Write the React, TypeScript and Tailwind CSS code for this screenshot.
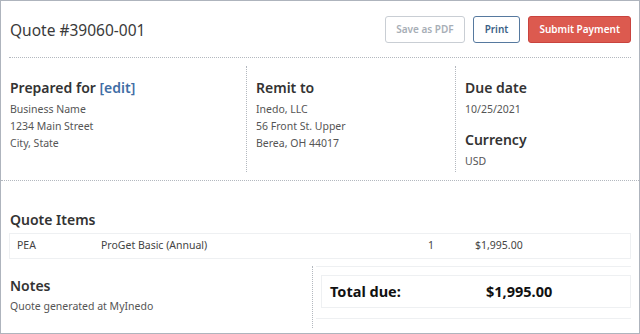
const font = "font-['Segoe_UI','Noto_Sans','Liberation_Sans',sans-serif]";

export default function App() {
  return (
    <div className={`h-[334px] w-[640px] overflow-hidden border border-[#aeb4bd] bg-white text-[#333] ${font}`}>
      <header className="mx-[8px] flex h-[57px] items-center justify-between border-b border-dotted border-[#b3b8bf] pl-[1px]">
        <h1 className="mt-[3px] text-[15.5px] text-[#3a3a3a]">Quote #39060-001</h1>
        <div className="flex items-center gap-[8px]">
          <button className="h-[27px] rounded-[3px] border border-[#c9ced4] px-[10px] text-[10px] font-semibold text-[#a7aeb6]">
            Save as PDF
          </button>
          <button className="h-[27px] rounded-[3px] border border-[#56799f] px-[11px] text-[10px] font-semibold text-[#3b5f86]">
            Print
          </button>
          <button className="h-[27px] rounded-[3px] border border-[#c9433e] bg-[#dc5a4f] px-[10px] text-[10px] font-semibold text-white">
            Submit Payment
          </button>
        </div>
      </header>

      <section className="flex border-b border-dotted border-[#b3b8bf] py-[8px]">
        <div className="w-[246px] border-r border-dotted border-[#b3b8bf] pl-[9px] pt-[12px]">
          <h2 className="text-[14px] font-semibold leading-[20px]">
            Prepared for <span className="text-[#3f6ea5]">[edit]</span>
          </h2>
          <div className="mt-[3px] text-[10.5px] leading-[17px] text-[#555]">
            <p>Business Name</p>
            <p>1234 Main Street</p>
            <p>City, State</p>
          </div>
        </div>
        <div className="h-[106px] w-[209px] border-r border-dotted border-[#b3b8bf] pl-[9px] pt-[12px]">
          <h2 className="text-[14px] font-semibold leading-[20px]">Remit to</h2>
          <div className="mt-[3px] text-[10.5px] leading-[17px] text-[#555]">
            <p>Inedo, LLC</p>
            <p>56 Front St. Upper</p>
            <p>Berea, OH 44017</p>
          </div>
        </div>
        <div className="pl-[9px] pt-[12px]">
          <h2 className="text-[14px] font-semibold leading-[20px]">Due date</h2>
          <p className="mt-[3px] text-[10.5px] leading-[17px] text-[#555]">10/25/2021</p>
          <h2 className="mt-[12px] text-[14px] font-semibold leading-[20px]">Currency</h2>
          <p className="mt-[3px] text-[10.5px] leading-[17px] text-[#555]">USD</p>
        </div>
      </section>

      <section className="px-[8px] pt-[29px]">
        <h2 className="pl-[1px] text-[14px] font-semibold leading-[20px]">Quote Items</h2>
        <div className="mt-[3px] flex h-[26px] items-center border border-[#eef0f2] text-[10.5px] text-[#444]">
          <span className="w-[91px] pl-[7px]">PEA</span>
          <span className="w-[327px]">ProGet Basic (Annual)</span>
          <span className="w-[47px]">1</span>
          <span>$1,995.00</span>
        </div>
        <div className="flex">
          <div className="w-[303px] pl-[1px] pt-[17px]">
            <h2 className="text-[14px] font-semibold leading-[20px]">Notes</h2>
            <p className="mt-[2px] text-[10.5px] leading-[17px] text-[#555]">Quote generated at MyInedo</p>
          </div>
          <div className="mt-[7px] h-[62px] flex-1 border-l border-dotted border-[#b3b8bf] pl-[3px]">
            <div className="border-t border-[#eef0f2] pt-[8px]">
              <div className="ml-[5px] flex h-[33px] items-center border border-[#eef0f2] text-[14.5px] font-bold text-[#111]">
                <span className="w-[164px] pl-[8px]">Total due:</span>
                <span>$1,995.00</span>
              </div>
              <div className="mt-[10px] border-t border-[#eef0f2]" />
            </div>
          </div>
        </div>
      </section>
    </div>
  );
}
